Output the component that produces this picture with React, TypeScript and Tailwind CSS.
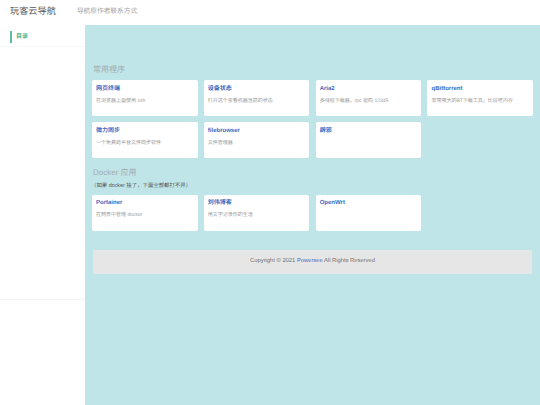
const COMMON = [
  { title: "网页终端", desc: "在浏览器上面使用 ssh" },
  { title: "设备状态", desc: "打开这个查看机器当前的状态" },
  { title: "Aria2", desc: "多线程下载器，rpc 密码 12345" },
  { title: "qBittorrent", desc: "非常强大的BT下载工具，比较吃内存" },
  { title: "微力同步", desc: "一个免费跨平台文件同步软件" },
  { title: "filebrowser", desc: "文件管理器" },
  { title: "辟邪", desc: "" },
];

const DOCKER = [
  { title: "Portainer", desc: "在网页中管理 docker" },
  { title: "刘伟博客", desc: "用文字记录你的生活" },
  { title: "OpenWrt", desc: "" },
];

const FONT = "font-['Liberation_Sans','Noto_Sans_CJK_SC',sans-serif]";

function Card({ item }: { item: { title: string; desc: string } }) {
  return (
    <div className="h-[35.7px] rounded-[2px] bg-white px-[4px] pt-[4.5px]">
      <div className="text-[6px] font-bold leading-[9px] text-[#3c6cc0]">{item.title}</div>
      <div className="mt-[3px] text-[5px] leading-[8px] whitespace-nowrap text-[#9a9a9a]">{item.desc}</div>
    </div>
  );
}

export default function App() {
  return (
    <div className={`flex h-[405px] w-[540px] flex-col overflow-hidden bg-white [text-rendering:geometricPrecision] ${FONT}`}>
      {/* top bar */}
      <header className="flex h-[25px] shrink-0 items-center pb-[3px] pl-[10px]">
        <span className="text-[9.2px] leading-[20px] text-[#555555]">玩客云导航</span>
        <span className="ml-[21px] mt-[3px] text-[6.7px] text-[#a3a3a3]">导航原作者联系方式</span>
      </header>

      <div className="flex flex-1">
        <aside className="flex w-[84.5px] shrink-0 flex-col">
          <div className="h-[22px] border-b border-[#f7f7f7] pl-[10px] pt-[6px]">
            <div className="border-l-2 border-[#5cc09a] pl-[4px] text-[6px] font-bold leading-[12px] text-[#4fb78f]">
              目录
            </div>
          </div>
          <div className="h-[253px] border-b border-[#f2f2f2]" />
        </aside>

        <main className="flex-1 bg-[#bfe5e9] pl-[7.5px] pr-[7px]">
          <h2 className="ml-[1px] mt-[39px] text-[8px] leading-[12px] text-[#a3acae]">常用程序</h2>
          <div className="mt-[4px] grid grid-cols-4 gap-x-[6.33px] gap-y-[6.6px]">
            {COMMON.map((item) => (
              <Card key={item.title} item={item} />
            ))}
          </div>

          <h2 className="ml-[1px] mt-[9px] text-[8px] leading-[12px] text-[#a3acae]">Docker 应用</h2>
          <p className="mt-[3px] -ml-[1px] text-[5.4px] leading-[8px] text-[#555555]">（如果 docker 挂了，下面全部都打不开）</p>
          <div className="mt-[5px] grid grid-cols-4 gap-x-[6.33px]">
            {DOCKER.map((item) => (
              <Card key={item.title} item={item} />
            ))}
          </div>

          <footer className="ml-[1px] mr-[1px] mt-[19px] h-[24px] bg-[#e6e6e6] pt-[7px] text-center text-[5.8px] leading-[9px] text-[#707070]">
            Copyright © 2021 <span className="text-[#3c6cc0]">Powersee</span> All Rights Reserved
          </footer>
        </main>
      </div>
    </div>
  );
}
